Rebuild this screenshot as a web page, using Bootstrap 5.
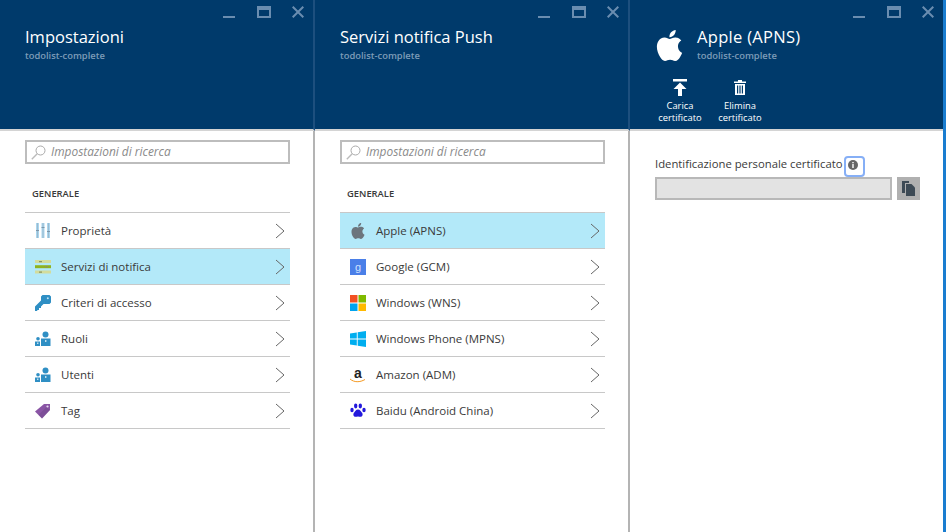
<!DOCTYPE html>
<html lang="it">
<head>
  <meta charset="UTF-8">
  <title>Servizi notifica Push</title>
  <link href="https://cdn.jsdelivr.net/npm/bootstrap@5.3.0/dist/css/bootstrap.min.css" rel="stylesheet">
  <style>
    body { font-family: "Open Sans", "Noto Sans", sans-serif; color: #3a3a3a; background: #fff; overflow: hidden; }
    .portal { height: 532px; }
    .blade { width: 315px; height: 532px; border-right: 2px solid #b4b4b4; }
    .blade-last { width: 313px; border-right: 0; }
    .edge-strip { width: 3px; background: #1a7dd0; }
    .blade-head { height: 131px; background: #003a6b; border-bottom: 2px solid #d4d4d4; color: #fff; margin-right: -2px; border-right: 2px solid #1d4f7e; }
    .blade-last .blade-head { margin-right: 0; border-right: 0; }
    .win-ctrls { height: 18px; padding: 6px 9px 0 0; gap: 21px; line-height: 0; }
    .win-ctrls svg { display: block; }
    .win-ctrls svg:first-child { margin-right: 1px; }
    .blade-title { font-size: 16.5px; line-height: 22px; margin: 8px 0 0 25px; }
    .blade-sub { font-size: 9.4px; font-weight: 600; line-height: 14px; margin: 1px 0 0 25px; color: #7d9cb8; }
    .apple-logo { margin: 12px 12px 0 24px; }
    .apple-head .blade-title, .apple-head .blade-sub { margin-left: 0; }
    .apple-head .blade-title { letter-spacing: .3px; }
    .cmd-bar { margin: 16px 0 0 23px; gap: 6px; }
    .cmd-btn { width: 54px; font-size: 9.4px; line-height: 12px; text-align: center; color: #fff; }
    .cmd-btn svg { display: block; margin: 0 auto 4px; }
    .search-box { height: 24px; margin: 9px 23px 0 25px; border: 2px solid #bdbdbd; padding-left: 4px; }
    .search-box input { border: 0; outline: 0; padding: 0; margin-left: 5px; width: 230px; font-size: 11.9px; font-style: italic; color: #666; background: transparent; }
    .search-box input::placeholder { color: #8a8a8a; opacity: 1; }
    .sect-label { font-size: 9.4px; font-weight: 600; line-height: 12px; margin: 24px 0 0 32px; color: #3a3a3a; }
    .opt-list { margin: 12px 23px 0 25px; border-radius: 0; }
    .opt-list .list-group-item { height: 36px; padding: 0 5px 0 10px; border-left: 0; border-right: 0; border-color: #c8c8c8; font-size: 11.5px; color: #3a3a3a; border-radius: 0; }
    .opt-list .list-group-item:first-child { height: 37px; }
    .opt-list .list-group-item.active { background: #b3e9f9; color: #3a3a3a; border-color: #c8c8c8; }
    .opt-list .list-group-item + .list-group-item.active { margin-top: 0; border-top-width: 0; }
    .opt-ico { width: 16px; height: 16px; margin-right: 10px; flex-shrink: 0; }
    .opt-chev { margin-left: auto; flex-shrink: 0; }
    .ico-box { font-family: "Liberation Sans", sans-serif; line-height: 16px; text-align: center; }
    .ico-google { background: #4a7fe8; color: #cfe0ff; font-size: 11px; }
    .ico-amazon { position: relative; color: #222; font-size: 14px; font-weight: 700; line-height: 13px; }
    .ico-amazon svg { position: absolute; left: 0; bottom: 0; }
    .cert-form { padding: 24px 23px 0 25px; }
    .cert-label { height: 22px; font-size: 11.3px; }
    .cert-text { padding-bottom: 3px; }
    .info-focus { width: 21px; height: 21px; margin-left: 1px; border: 2px solid #86aff6; border-radius: 4px; padding: 0 3px 2px 0; }
    .cert-row { gap: 5px; }
    .cert-value { width: 237px; height: 23px; background: #e3e3e3; border: 2px solid #b8b8b8; }
    .copy-btn { width: 23px; height: 23px; background: #b0b0b0; }
  </style>
</head>
<body>

<svg width="0" height="0" class="position-absolute">
  <symbol id="i-apple" viewBox="0 0 24 24"><path fill="currentColor" d="M12.152 6.896c-.948 0-2.415-1.078-3.96-1.04-2.04.027-3.91 1.183-4.961 3.014-2.117 3.675-.546 9.103 1.519 12.09 1.013 1.454 2.208 3.09 3.792 3.039 1.52-.065 2.09-.987 3.935-.987 1.831 0 2.35.987 3.96.948 1.637-.026 2.676-1.48 3.676-2.948 1.156-1.688 1.636-3.325 1.662-3.415-.039-.013-3.182-1.221-3.22-4.857-.026-3.04 2.48-4.494 2.597-4.559-1.429-2.09-3.623-2.324-4.39-2.376-2-.156-3.675 1.09-4.61 1.09zM15.53 3.83c.843-1.012 1.4-2.427 1.245-3.83-1.207.052-2.662.805-3.532 1.818-.78.896-1.454 2.338-1.273 3.714 1.338.104 2.715-.688 3.559-1.701"/></symbol>
  <symbol id="i-min" viewBox="0 0 12 12"><rect x="0" y="10" width="12" height="2" fill="#6a8db0"/></symbol>
  <symbol id="i-max" viewBox="0 0 14 12"><path fill="#6a8db0" d="M0 0h14v12H0zM2 4v6h10V4z" fill-rule="evenodd"/></symbol>
  <symbol id="i-close" viewBox="0 0 12 12"><path stroke="#6a8db0" stroke-width="2" d="M.7.7l10.6 10.6M11.3.7L.7 11.3"/></symbol>
  <symbol id="i-chev" viewBox="0 0 10 16"><path fill="none" stroke="#666" stroke-width="1" d="M1 1l8 7-8 7"/></symbol>
  <symbol id="i-search" viewBox="0 0 15 15"><circle cx="9.5" cy="5.5" r="4.5" fill="none" stroke="#aaa" stroke-width="1"/><path stroke="#bbb" stroke-width="1.4" d="M6.2 8.8L.8 14.2"/></symbol>
  <symbol id="i-props" viewBox="0 0 16 16"><path fill="#a9d6ef" d="M1 0h3v15H1zM6.500 0h3v15h-3zM12 0h3v15h-3z"/><path fill="#9ab4c6" d="M2.100 0h.8v15h-.8zM7.600 0h.8v15h-.8zM13.100 0h.8v15h-.8z"/><path fill="#7b96aa" d="M1 7h3v1H1zM6.500 4h3v1h-3zM12 8h3v1h-3z"/></symbol>
  <symbol id="i-notif" viewBox="0 0 16 16"><path fill="#d3dc9c" d="M0 1h16v3H0zM0 11.500h16v3H0z"/><path fill="#8fb31e" d="M0 6.200h16v3H0z"/><path fill="#8b9560" d="M4 2h3v1.200H4zM10 7.100h3v1.200h-3zM4 12.500h3v1.200H4z"/></symbol>
  <symbol id="i-key" viewBox="0 0 16 16"><path fill="#2f8fc4" d="M6 1.500L7.500 0h7L16 1.500v6L14.500 9h-6L6 11.500V13H4v2H2.500L2 16H0v-4.500l6-6z"/><circle cx="12.800" cy="3.200" r="1" fill="#bfe3f5"/></symbol>
  <symbol id="i-users" viewBox="0 0 16 16"><circle cx="10.500" cy="3.500" r="3" fill="#2f8fc4"/><path fill="#2f8fc4" d="M6 7.500h9.500V15H6z"/><circle cx="3" cy="7.800" r="1.800" fill="#2f8fc4"/><path fill="#2f8fc4" d="M0 10.500h5V15H0z"/><path stroke="#fff" stroke-width="1" d="M5.500 15V8M2.800 11.500v1.500M10.800 9v2"/></symbol>
  <symbol id="i-tag" viewBox="0 0 16 16"><path fill="#8a55a5" d="M9 1h6v6l-8 8.500L0 8.500z"/><path fill="#5f3f7a" d="M15 7l-8 8.500L3.500 12l8-8z" opacity=".3"/><circle cx="12.500" cy="3.500" r="1.100" fill="#e9dcf0"/></symbol>
  <symbol id="i-win" viewBox="0 0 16 16"><path fill="#f25022" d="M0 0h7.500v7.500H0z"/><path fill="#7fba00" d="M8.500 0H16v7.500H8.500z"/><path fill="#00a4ef" d="M0 8.500h7.500V16H0z"/><path fill="#ffb900" d="M8.500 8.500H16V16H8.500z"/></symbol>
  <symbol id="i-winph" viewBox="0 0 16 16"><path fill="#00aeef" d="M0 2.500l6.800-1v6H0zM7.700 1.300L16 0v7.500H7.700zM0 8.500h6.800v6l-6.800-1zM7.700 8.500H16V16l-8.300-1.300z"/></symbol>
  <symbol id="i-paw" viewBox="0 0 16 16"><g fill="#2319dc"><ellipse cx="5.700" cy="3" rx="1.700" ry="2.400"/><ellipse cx="10.300" cy="3" rx="1.700" ry="2.400"/><ellipse cx="2" cy="7" rx="1.700" ry="2.200"/><ellipse cx="14" cy="7" rx="1.700" ry="2.200"/><path d="M8 6.500c2 0 2.700 1.800 3.800 3 1.400 1.500 1 4.300-1.300 4.300-1 0-1.600-.4-2.500-.4s-1.500.4-2.500.4c-2.300 0-2.700-2.800-1.300-4.300 1.100-1.200 1.800-3 3.800-3z"/></g></symbol>
  <symbol id="i-upload" viewBox="0 0 16 17"><path fill="#fff" d="M1 0h14v2.500H1zM8 3.500l6.500 6.500h-4.500v7H6v-7H1.500z"/></symbol>
  <symbol id="i-trash" viewBox="0 0 12 15"><path fill="#fff" fill-rule="evenodd" d="M4 0h4v1.500h4V3H0V1.500h4zM1 4h10v11H1zM3 5.500v8h1.200v-8zM5.400 5.500v8h1.200v-8zM7.800 5.500v8H9v-8z"/></symbol>
  <symbol id="i-copy" viewBox="0 0 13 15"><path fill="#3d4a55" d="M0 0h7v2H3v10H0z"/><path fill="#3d4a55" d="M4 3h5.500L13 6.500V15H4z"/></symbol>
</svg>

<div class="portal d-flex">

  <section class="blade">
    <header class="blade-head">
      <div class="win-ctrls d-flex justify-content-end">
        <svg width="12" height="12"><use href="#i-min"/></svg>
        <svg width="14" height="12"><use href="#i-max"/></svg>
        <svg width="12" height="12"><use href="#i-close"/></svg>
      </div>
      <div class="blade-title">Impostazioni</div>
      <div class="blade-sub">todolist-complete</div>
    </header>
    <div class="search-box d-flex align-items-center">
      <svg width="15" height="15"><use href="#i-search"/></svg>
      <input type="text" placeholder="Impostazioni di ricerca">
    </div>
    <div class="sect-label">GENERALE</div>
    <ul class="list-group opt-list">
      <li class="list-group-item d-flex align-items-center"><svg class="opt-ico"><use href="#i-props"/></svg>Proprietà<svg class="opt-chev" width="10" height="16"><use href="#i-chev"/></svg></li>
      <li class="list-group-item d-flex align-items-center active"><svg class="opt-ico"><use href="#i-notif"/></svg>Servizi di notifica<svg class="opt-chev" width="10" height="16"><use href="#i-chev"/></svg></li>
      <li class="list-group-item d-flex align-items-center"><svg class="opt-ico"><use href="#i-key"/></svg>Criteri di accesso<svg class="opt-chev" width="10" height="16"><use href="#i-chev"/></svg></li>
      <li class="list-group-item d-flex align-items-center"><svg class="opt-ico"><use href="#i-users"/></svg>Ruoli<svg class="opt-chev" width="10" height="16"><use href="#i-chev"/></svg></li>
      <li class="list-group-item d-flex align-items-center"><svg class="opt-ico"><use href="#i-users"/></svg>Utenti<svg class="opt-chev" width="10" height="16"><use href="#i-chev"/></svg></li>
      <li class="list-group-item d-flex align-items-center"><svg class="opt-ico"><use href="#i-tag"/></svg>Tag<svg class="opt-chev" width="10" height="16"><use href="#i-chev"/></svg></li>
    </ul>
  </section>

  <section class="blade">
    <header class="blade-head">
      <div class="win-ctrls d-flex justify-content-end">
        <svg width="12" height="12"><use href="#i-min"/></svg>
        <svg width="14" height="12"><use href="#i-max"/></svg>
        <svg width="12" height="12"><use href="#i-close"/></svg>
      </div>
      <div class="blade-title">Servizi notifica Push</div>
      <div class="blade-sub">todolist-complete</div>
    </header>
    <div class="search-box d-flex align-items-center">
      <svg width="15" height="15"><use href="#i-search"/></svg>
      <input type="text" placeholder="Impostazioni di ricerca">
    </div>
    <div class="sect-label">GENERALE</div>
    <ul class="list-group opt-list">
      <li class="list-group-item d-flex align-items-center active"><svg class="opt-ico text-secondary"><use href="#i-apple"/></svg>Apple (APNS)<svg class="opt-chev" width="10" height="16"><use href="#i-chev"/></svg></li>
      <li class="list-group-item d-flex align-items-center"><span class="opt-ico ico-box ico-google">g</span>Google (GCM)<svg class="opt-chev" width="10" height="16"><use href="#i-chev"/></svg></li>
      <li class="list-group-item d-flex align-items-center"><svg class="opt-ico"><use href="#i-win"/></svg>Windows (WNS)<svg class="opt-chev" width="10" height="16"><use href="#i-chev"/></svg></li>
      <li class="list-group-item d-flex align-items-center"><svg class="opt-ico"><use href="#i-winph"/></svg>Windows Phone (MPNS)<svg class="opt-chev" width="10" height="16"><use href="#i-chev"/></svg></li>
      <li class="list-group-item d-flex align-items-center"><span class="opt-ico ico-box ico-amazon">a<svg width="16" height="5" viewBox="0 0 16 5"><path fill="none" stroke="#f59a23" stroke-width="1" d="M0 1c4 3.500 10 3.500 15 .5"/></svg></span>Amazon (ADM)<svg class="opt-chev" width="10" height="16"><use href="#i-chev"/></svg></li>
      <li class="list-group-item d-flex align-items-center"><svg class="opt-ico"><use href="#i-paw"/></svg>Baidu (Android China)<svg class="opt-chev" width="10" height="16"><use href="#i-chev"/></svg></li>
    </ul>
  </section>

  <section class="blade blade-last">
    <header class="blade-head">
      <div class="win-ctrls d-flex justify-content-end">
        <svg width="12" height="12"><use href="#i-min"/></svg>
        <svg width="14" height="12"><use href="#i-max"/></svg>
        <svg width="12" height="12"><use href="#i-close"/></svg>
      </div>
      <div class="apple-head d-flex">
        <svg class="apple-logo text-white" width="31" height="31"><use href="#i-apple"/></svg>
        <div>
          <div class="blade-title">Apple (APNS)</div>
          <div class="blade-sub">todolist-complete</div>
        </div>
      </div>
      <div class="cmd-bar d-flex">
        <div class="cmd-btn"><svg width="16" height="17"><use href="#i-upload"/></svg>Carica<br>certificato</div>
        <div class="cmd-btn"><svg width="12" height="17"><use href="#i-trash"/></svg>Elimina<br>certificato</div>
      </div>
    </header>
    <div class="cert-form">
      <div class="cert-label d-flex align-items-center"><span class="cert-text">Identificazione personale certificato</span>
        <span class="info-focus d-flex align-items-center justify-content-center">
          <svg width="10" height="10" viewBox="0 0 10 10"><circle cx="5" cy="5" r="5" fill="#666"/><path fill="#fff" d="M4.300 2h1.400v1.300H4.300zM4.300 4h1.400v4H4.300z"/></svg>
        </span>
      </div>
      <div class="cert-row d-flex">
        <div class="cert-value"></div>
        <div class="copy-btn d-flex align-items-center justify-content-center"><svg width="13" height="15"><use href="#i-copy"/></svg></div>
      </div>
    </div>
  </section>

  <div class="edge-strip"></div>
</div>

<script src="https://cdn.jsdelivr.net/npm/bootstrap@5.3.0/dist/js/bootstrap.bundle.min.js"></script>
</body>
</html>
